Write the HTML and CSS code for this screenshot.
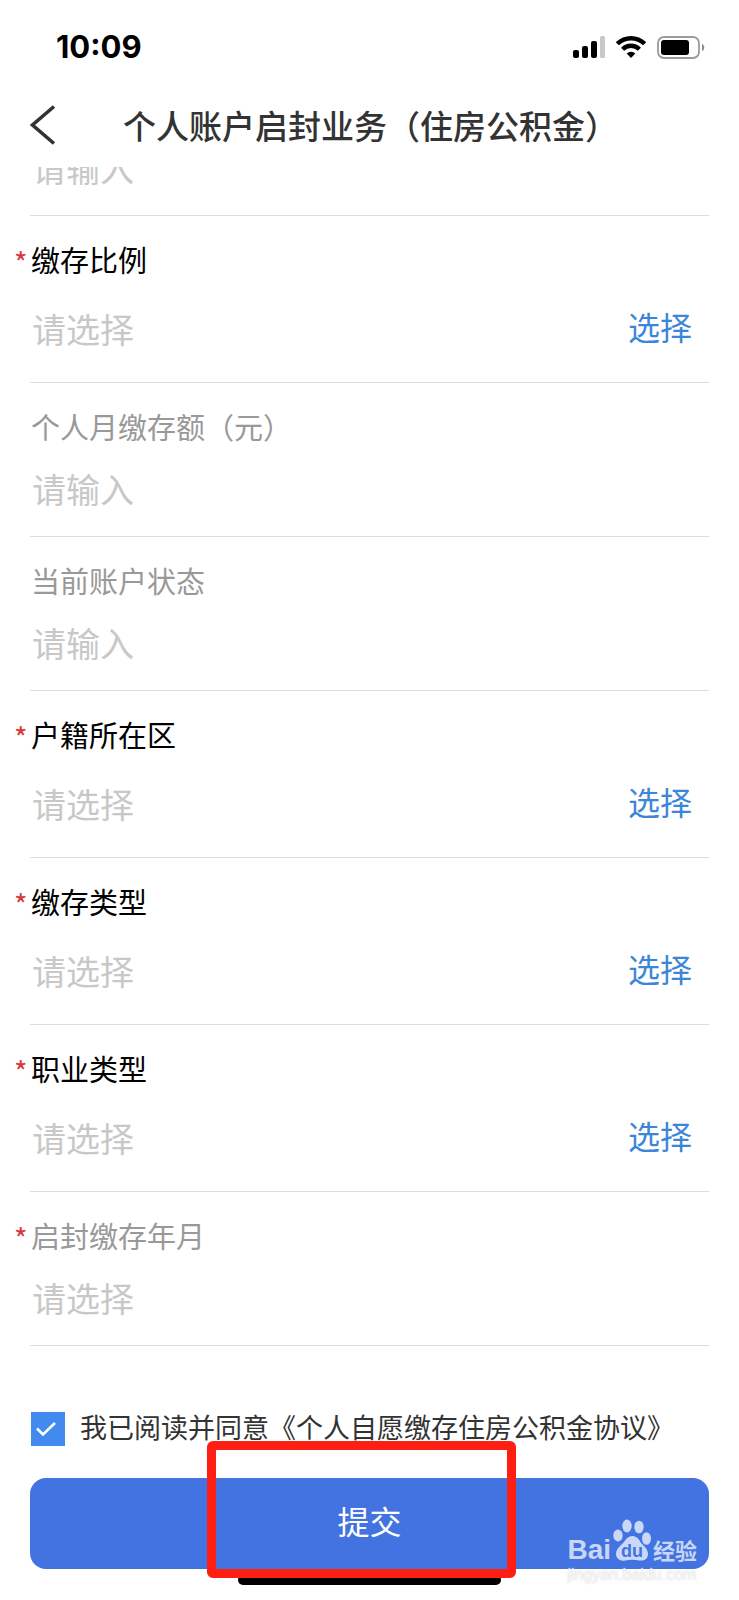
FILE: index.html
```html
<!DOCTYPE html>
<html lang="zh-CN">
<head>
<meta charset="utf-8">
<meta name="viewport" content="width=device-width, initial-scale=1">
<title>个人账户启封业务（住房公积金）</title>
<link rel="stylesheet" href="styles.css">
</head>
<body>
<div class="status-bar">
  <span class="time">10:09</span>
  <div class="status-icons">
    <svg width="32" height="22" viewBox="0 0 32 22" aria-hidden="true">
      <rect x="0" y="14" width="6" height="8" rx="2"/>
      <rect x="9" y="10" width="6" height="12" rx="2"/>
      <rect x="18" y="5" width="6" height="17" rx="2"/>
      <rect x="27" y="0" width="5" height="22" rx="1.5" fill="#c9c9c9"/>
    </svg>
    <svg width="30" height="22" viewBox="0 0 30 22" aria-hidden="true">
      <g fill="none" stroke="#000" stroke-width="4.4">
        <path d="M1.4 7.8a19.4 19.4 0 0 1 27.2 0"/>
        <path d="M6.6 13.2a12 12 0 0 1 16.8 0"/>
      </g>
      <path d="M15 22l-4.3-4.4a6.2 6.2 0 0 1 8.6 0z"/>
    </svg>
    <svg width="48" height="23" viewBox="0 0 48 23" aria-hidden="true">
      <rect x="1" y="1" width="41" height="21" rx="6" fill="none" stroke="#9b9b9b" stroke-width="1.8"/>
      <rect x="4" y="4" width="28" height="15" rx="3"/>
      <path d="M45 8c3 1.200 3 6 0 7.200z" fill="#8d8d8d"/>
    </svg>
  </div>
</div>
<header class="nav">
  <button class="back" type="button" aria-label="返回">
    <svg width="26" height="40" viewBox="0 0 26 40" aria-hidden="true"><path d="M24 1.500L2.500 20 24 38.500" fill="none" stroke="#333" stroke-width="3.600"/></svg>
  </button>
  <h1 class="title">个人账户启封业务（住房公积金）</h1>
</header>
<form class="form">
  <div class="field field-scrolled">
    <input class="value" type="text" placeholder="请输入" aria-label="缴存基数">
  </div>
  <div class="field">
    <label class="label required" for="ratio">缴存比例</label>
    <div class="picker"><input class="value" id="ratio" type="text" placeholder="请选择" readonly><button class="choose" type="button">选择</button></div>
  </div>
  <div class="field">
    <label class="label muted" for="amount">个人月缴存额（元）</label>
    <input class="value" id="amount" type="text" placeholder="请输入">
  </div>
  <div class="field">
    <label class="label muted" for="state">当前账户状态</label>
    <input class="value" id="state" type="text" placeholder="请输入">
  </div>
  <div class="field">
    <label class="label required" for="district">户籍所在区</label>
    <div class="picker"><input class="value" id="district" type="text" placeholder="请选择" readonly><button class="choose" type="button">选择</button></div>
  </div>
  <div class="field">
    <label class="label required" for="deposit">缴存类型</label>
    <div class="picker"><input class="value" id="deposit" type="text" placeholder="请选择" readonly><button class="choose" type="button">选择</button></div>
  </div>
  <div class="field">
    <label class="label required" for="job">职业类型</label>
    <div class="picker"><input class="value" id="job" type="text" placeholder="请选择" readonly><button class="choose" type="button">选择</button></div>
  </div>
  <div class="field">
    <label class="label required muted" for="month">启封缴存年月</label>
    <input class="value" id="month" type="text" placeholder="请选择" readonly>
  </div>
  <div class="agreement">
    <span class="tick">
      <input class="tick-box" id="agree" type="checkbox" checked>
      <svg class="tick-mark" width="34" height="34" viewBox="0 0 34 34" aria-hidden="true"><path d="M6 16.500l6 6L24 11" fill="none" stroke="#fff" stroke-width="2.600"/></svg>
    </span>
    <label class="agreement-text" for="agree">我已阅读并同意《个人自愿缴存住房公积金协议》</label>
  </div>
  <div class="submit-area">
    <button class="submit" type="submit">提交</button>
    <div class="home-indicator"></div>
    <div class="highlight"></div>
    <div class="watermark">
      <div class="brand">
        <span class="brand-latin">Bai</span>
        <svg width="38" height="42" viewBox="0 0 38 42" aria-hidden="true">
          <g fill="currentColor">
            <ellipse cx="5" cy="16.500" rx="4.700" ry="6"/>
            <ellipse cx="14" cy="7" rx="4.700" ry="6.500"/>
            <ellipse cx="26" cy="8" rx="4.700" ry="6.300"/>
            <ellipse cx="33.500" cy="19.500" rx="4.500" ry="6.300"/>
            <path d="M12 21.500C16 15.500 23 15.500 26.500 21.500C29 26 35 29 35 35C35 40 31 42 26.500 41.500C21 40.500 17 40.500 12 41.500C7 42.500 3 39.500 3 35C3 29 9 26 12 21.500Z"/>
          </g>
          <text class="brand-du" x="19" y="38" text-anchor="middle">du</text>
        </svg>
        <span class="brand-han">经验</span>
      </div>
      <div class="site">jingyan.baidu.com</div>
    </div>
  </div>
</form>
</body>
</html>
```

FILE: styles.css
```css
* {
  box-sizing: border-box;
}

body {
  margin: 0;
  background: #fff;
  color: #333;
  font-family: "Noto Sans CJK SC", sans-serif;
}

button,
input {
  margin: 0;
  padding: 0;
  border: 0;
  background: none;
  font-family: inherit;
}

.status-bar {
  display: flex;
  align-items: center;
  justify-content: space-between;
  height: 94px;
  padding: 0 34px 0 56px;
}

.time {
  color: #000;
  font: 700 31px/36px Inter, sans-serif;
}

.status-icons {
  display: flex;
  align-items: center;
  gap: 11px;
}

.nav {
  display: flex;
  align-items: center;
  height: 73px;
  padding: 0 30px 12px;
}

.back {
  display: flex;
  align-items: center;
  height: 60px;
}

.title {
  flex: 1;
  margin: 0;
  padding-left: 67px;
  font-size: 33px;
  line-height: 60px;
  font-weight: 500;
  white-space: nowrap;
}

.form {
  padding: 0 30px;
}

.field {
  display: flex;
  flex-direction: column;
  padding-top: 26px;
  border-bottom: 1px solid #ddd;
}

.field-scrolled {
  height: 49px;
  padding-top: 0;
  justify-content: flex-end;
  overflow: hidden;
}

.label {
  position: relative;
  padding-left: 1px;
  color: #000;
  font-size: 29px;
  line-height: 34px;
}

.muted {
  color: #999;
}

.required::before {
  content: "*";
  position: absolute;
  left: -16px;
  color: #d8383a;
  font-size: 29px;
  line-height: 38px;
}

.value {
  flex: none;
  width: 100%;
  height: 44px;
  margin: 24px 0 25px;
  padding-left: 2px;
  color: #333;
  font-size: 34px;
  line-height: 44px;
}

.field-scrolled .value {
  margin-top: 0;
}

.value::placeholder {
  color: #c8c8c8;
  opacity: 1;
}

.picker {
  display: flex;
  align-items: center;
  height: 60px;
  margin: 23px 0;
  padding-right: 17px;
}

.picker .value {
  flex: 1;
  min-width: 0;
  margin: 0;
}

.choose {
  padding-bottom: 6px;
  color: #3c86d8;
  font-size: 32px;
  line-height: 54px;
}

.agreement {
  display: flex;
  align-items: center;
  gap: 15px;
  margin-top: 66px;
  padding-left: 1px;
  font-size: 27px;
  line-height: 30px;
  white-space: nowrap;
}

.agreement-text {
  padding-bottom: 4px;
}

.tick {
  display: grid;
}

.tick-box,
.tick-mark {
  grid-area: 1 / 1;
}

.tick-box {
  appearance: none;
  width: 34px;
  height: 34px;
  background: #428af0;
}

.tick-mark {
  pointer-events: none;
}

.submit-area {
  position: relative;
  margin-top: 32px;
  padding-bottom: 30px;
}

.submit {
  display: block;
  width: 100%;
  height: 91px;
  padding-bottom: 7px;
  border-radius: 16px;
  background: #4273e1;
  color: #fff;
  font-size: 32px;
}

.home-indicator {
  position: absolute;
  left: 208px;
  right: 208px;
  bottom: 14px;
  height: 10px;
  border-radius: 5px;
  background: #000;
}

.highlight {
  position: absolute;
  top: -37px;
  left: 177px;
  right: 193px;
  height: 137px;
  border: 9px solid #ff1f12;
  border-radius: 6px;
  pointer-events: none;
}

.watermark {
  position: absolute;
  top: 41px;
  right: 12px;
  color: rgba(255, 255, 255, 0.72);
  pointer-events: none;
}

.brand {
  display: flex;
  align-items: flex-end;
  gap: 2px;
}

.brand-latin {
  font: 700 28px/28px "Liberation Sans", sans-serif;
  height: 25px;
}

.brand-du {
  fill: #4273e1;
  font: 700 18px "Liberation Sans", sans-serif;
}

.brand-han {
  font-size: 22px;
  line-height: 24px;
  font-weight: 700;
}

.site {
  margin-top: 4px;
  font: 16px/20px "Liberation Sans", sans-serif;
  text-shadow: 0 0 2px #ccc;
}
```
